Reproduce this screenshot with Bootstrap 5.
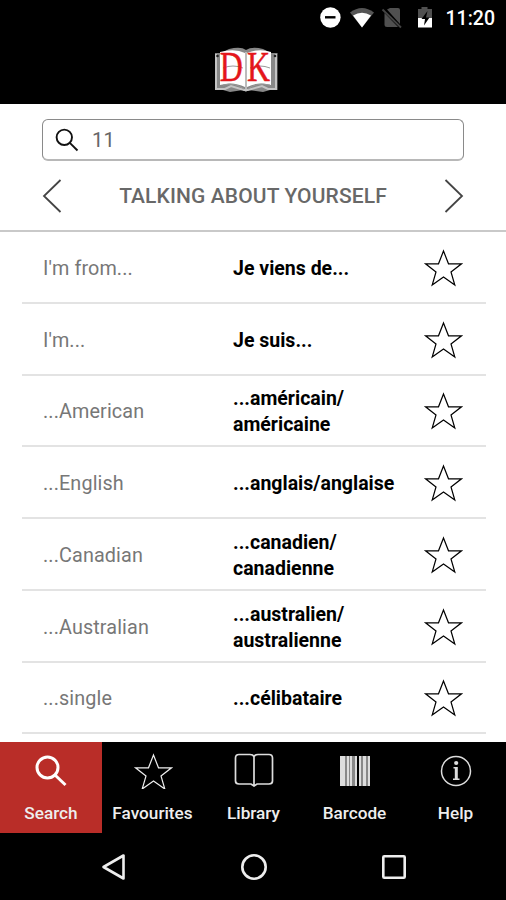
<!DOCTYPE html>
<html lang="en">
<head>
<meta charset="utf-8">
<meta name="viewport" content="width=device-width, initial-scale=1">
<title>DK Phrasebook</title>
<link href="https://cdn.jsdelivr.net/npm/bootstrap@5.3.0/dist/css/bootstrap.min.css" rel="stylesheet">
<style>
body{font-family:Roboto,"Noto Sans",sans-serif;color:#000;background:#fff}
svg{display:block;flex:none}
.screen{width:506px;height:900px}
.status-bar{height:36px;padding-right:11px}
.clock{font-size:19.5px;font-weight:500;line-height:36px;padding-top:1px}
.brand-bar{height:68px;padding:2px 12px 0 0}
.search-area{height:128px;padding:15px 42px 0;border-bottom:2px solid #c9c9c9}
.search-box{height:42px;border:1px solid #8a8a8a;border-bottom:2px solid #b8b8b8;border-radius:6px;padding-left:12px;gap:13px}
.search-text{font-size:20px;color:#666;letter-spacing:.2px}
.topic{height:70px}
.topic-title{font-size:21px;font-weight:500;color:#686868;line-height:26px;letter-spacing:.12px}
.phrases{padding:0 20px 0 22px;min-height:0}
.phrase{height:71.75px;border-bottom:2px solid #e3e3e3;padding:2px 0 0 21px}
.source,.target{width:190px;line-height:26px;padding-top:2px}
.source{font-size:19.8px;color:#777;letter-spacing:.12px}
.target{font-size:19.5px;font-weight:700}
.tabs{height:91px;background:#000}
.tab-item{color:#eee;padding:11px 0 0;font-size:17.2px;font-weight:500;line-height:24px}
.tab-item svg{margin-bottom:12px}
.tab-item.current{background:#b92d28}
.tab-item:not(.current){flex:1 1 0}
.tab-item.current{flex:0 0 102px}
.sys-bar{height:67px;padding:0 99px 0 101px}
</style>
</head>
<body>
<div class="screen d-flex flex-column overflow-hidden">
  <header class="bg-black text-white">
    <div class="status-bar d-flex justify-content-end align-items-center">
      <svg width="128" height="36" viewBox="318 0 128 36">
        <circle cx="330.4" cy="17.5" r="10.2" fill="#fff"/><path d="M325 17.3h10.5" stroke="#000" stroke-width="2.4"/>
        <path d="M350 12.500Q362 3.500 374 12.500L362 27.500Z" fill="#555"/><path d="M353 15.500Q362 10 371 15.500L362 27.500Z" fill="#fff"/>
        <path d="M387 9.500L390 8h8q2 0 2 2v14zM384.500 13L398 27h-11q-2.500 0-2.500-2z" fill="#505050"/><path d="M382.500 9.500L401 27.500" stroke="#444" stroke-width="1.800"/>
        <path d="M418 9h3.500V7h6v2h4.500v9h-14z" fill="#505050"/><path d="M418 18h14v9.500h-14z" fill="#fff"/><path d="M427.500 11l-6 8h3.500l-1 6.500 5.500-8H426z" fill="#000"/>
      </svg>
      <span class="clock">11:20</span>
    </div>
    <div class="brand-bar d-flex justify-content-center">
      <svg width="66" height="62" viewBox="0 -10 66 62" role="img" aria-label="DK">
        <path d="M1 5H7L15 1Q27-2 32 2Q38-2 49 1L57 5H63.500V42H56L49 44L34 42L32 44L29 42L16 44L9 42H1Z" fill="#888"/>
        <path d="M2 6v35h9l6-3 13 4h4l14-4 6 3h8V6" fill="none" stroke="#c4c4c4" stroke-width="2"/>
        <path d="M6 4Q21 0 31 5V39Q19 33 6 37ZM33 5Q45 0 57 4V37Q45 33 33 39Z" fill="#fff"/>
        <path d="M9 20q10-4 20 0M36 20q10-4 20 0M9 37q12-3 21 4M56 37q-14-3-22 4" fill="none" stroke="#999"/>
        <path d="M32 4v37" stroke="#bbb" stroke-width="2"/>
        <circle cx="3.500" cy="8" r="1.300" fill="#222"/><circle cx="61" cy="8" r="1.300" fill="#222"/>
        <text transform="scale(.76 1)" x="7.500 43.500" y="33" font-family="Liberation Serif,serif" font-size="42" fill="#e4161b" stroke="#e4161b" stroke-width=".5">DK</text>
      </svg>
    </div>
  </header>
  <section class="search-area">
    <div class="search-box d-flex align-items-center">
      <svg width="24" height="24" viewBox="0 0 24 24" fill="none" stroke="#111" stroke-width="1.900"><circle cx="9.300" cy="9.300" r="7.700"/><path d="M14.800 14.800L22.500 22.500"/></svg>
      <span class="search-text">11</span>
    </div>
    <div class="topic d-flex align-items-center justify-content-between">
      <svg width="20" height="36" viewBox="0 0 20 36" fill="none" stroke="#444" stroke-width="1.800"><path d="M18.500 2L2 18L18.500 34"/></svg>
      <span class="topic-title">TALKING ABOUT YOURSELF</span>
      <svg width="20" height="36" viewBox="0 0 20 36" fill="none" stroke="#444" stroke-width="1.800"><path d="M1.500 2L18 18L1.500 34"/></svg>
    </div>
  </section>
  <svg width="0" height="0" class="d-none"><symbol id="star" viewBox="0 0 40 38"><path d="M20.500 2L25.500 14.800H38.500L28 23L31.800 36L20.500 28L9.200 36L13 23L2.500 14.800H15.500Z" fill="none" stroke="currentColor" stroke-width="1.200"/></symbol></svg>
  <main class="phrases flex-grow-1 overflow-hidden">
    <div class="phrase d-flex align-items-center"><span class="source">I'm from...</span><span class="target">Je viens de...</span><svg width="40" height="38"><use href="#star"/></svg></div>
    <div class="phrase d-flex align-items-center"><span class="source">I'm...</span><span class="target">Je suis...</span><svg width="40" height="38"><use href="#star"/></svg></div>
    <div class="phrase d-flex align-items-center"><span class="source">...American</span><span class="target">...américain/<br>américaine</span><svg width="40" height="38"><use href="#star"/></svg></div>
    <div class="phrase d-flex align-items-center"><span class="source">...English</span><span class="target">...anglais/anglaise</span><svg width="40" height="38"><use href="#star"/></svg></div>
    <div class="phrase d-flex align-items-center"><span class="source">...Canadian</span><span class="target">...canadien/<br>canadienne</span><svg width="40" height="38"><use href="#star"/></svg></div>
    <div class="phrase d-flex align-items-center"><span class="source">...Australian</span><span class="target">...australien/<br>australienne</span><svg width="40" height="38"><use href="#star"/></svg></div>
    <div class="phrase d-flex align-items-center"><span class="source">...single</span><span class="target">...célibataire</span><svg width="40" height="38"><use href="#star"/></svg></div>
  </main>
  <nav class="tabs d-flex text-center flex-shrink-0">
    <div class="tab-item current d-flex flex-column align-items-center"><svg width="36" height="36" viewBox="0 0 36 36" fill="none" stroke="#fff" stroke-width="3"><circle cx="14.500" cy="14.500" r="10.500"/><path d="M22 22L32.500 32"/></svg>Search</div>
    <div class="tab-item d-flex flex-column align-items-center"><svg width="40" height="36"><use href="#star" width="40" height="38"/></svg>Favourites</div>
    <div class="tab-item d-flex flex-column align-items-center"><svg width="40" height="36" viewBox="0 0 40 36" fill="none" stroke="#ddd" stroke-width="1.700"><path d="M20 3.500Q19 1.500 16 1.500H5Q1.500 1.500 1.500 5V28Q1.500 31 5 31H17L20 33L23 31H35Q38.500 31 38.500 28V5Q38.500 1.500 35 1.500H24Q21 1.500 20 3.500V33"/></svg>Library</div>
    <div class="tab-item d-flex flex-column align-items-center"><svg width="36" height="36" viewBox="0 0 36 36"><path d="M3 3h5v30H3zM10 3h2v30h-2zM13 3h2v30h-2zM18 3h2v30h-2zM22 3h2v30h-2zM26 3h3v30h-3zM31 3h2v30h-2z" fill="#ddd"/><path d="M8 3h2v30H8zM12 3h1v30h-1zM15 3h3v30h-3zM24 3h2v30h-2zM29 3h2v30h-2z" fill="#888"/></svg>Barcode</div>
    <div class="tab-item d-flex flex-column align-items-center"><svg width="36" height="36" viewBox="0 0 36 36" fill="none" stroke="#ddd" stroke-width="1.500"><circle cx="18" cy="18" r="14.500"/><path d="M15.500 14.700h3M15 26.300h6.500" stroke-width="1.500"/><path d="M18.300 14v12" stroke-width="3"/><circle cx="18.200" cy="10" r="2.100" fill="#ddd" stroke="none"/></svg>Help</div>
  </nav>
  <footer class="sys-bar bg-black d-flex align-items-center justify-content-between flex-shrink-0">
    <svg width="26" height="28" viewBox="0 0 26 28" fill="none" stroke="#eee" stroke-width="2.600"><path d="M2.500 14L22.500 2.500V25.500Z" stroke-linejoin="round"/></svg>
    <svg width="28" height="28" viewBox="0 0 28 28" fill="none" stroke="#eee" stroke-width="2.600"><circle cx="14" cy="14" r="11.700"/></svg>
    <svg width="26" height="26" viewBox="0 0 26 26" fill="none" stroke="#eee" stroke-width="2.600"><rect x="2.300" y="2.300" width="21.400" height="21.400" rx="1"/></svg>
  </footer>
</div>
<script src="https://cdn.jsdelivr.net/npm/bootstrap@5.3.0/dist/js/bootstrap.bundle.min.js"></script>
</body>
</html>
